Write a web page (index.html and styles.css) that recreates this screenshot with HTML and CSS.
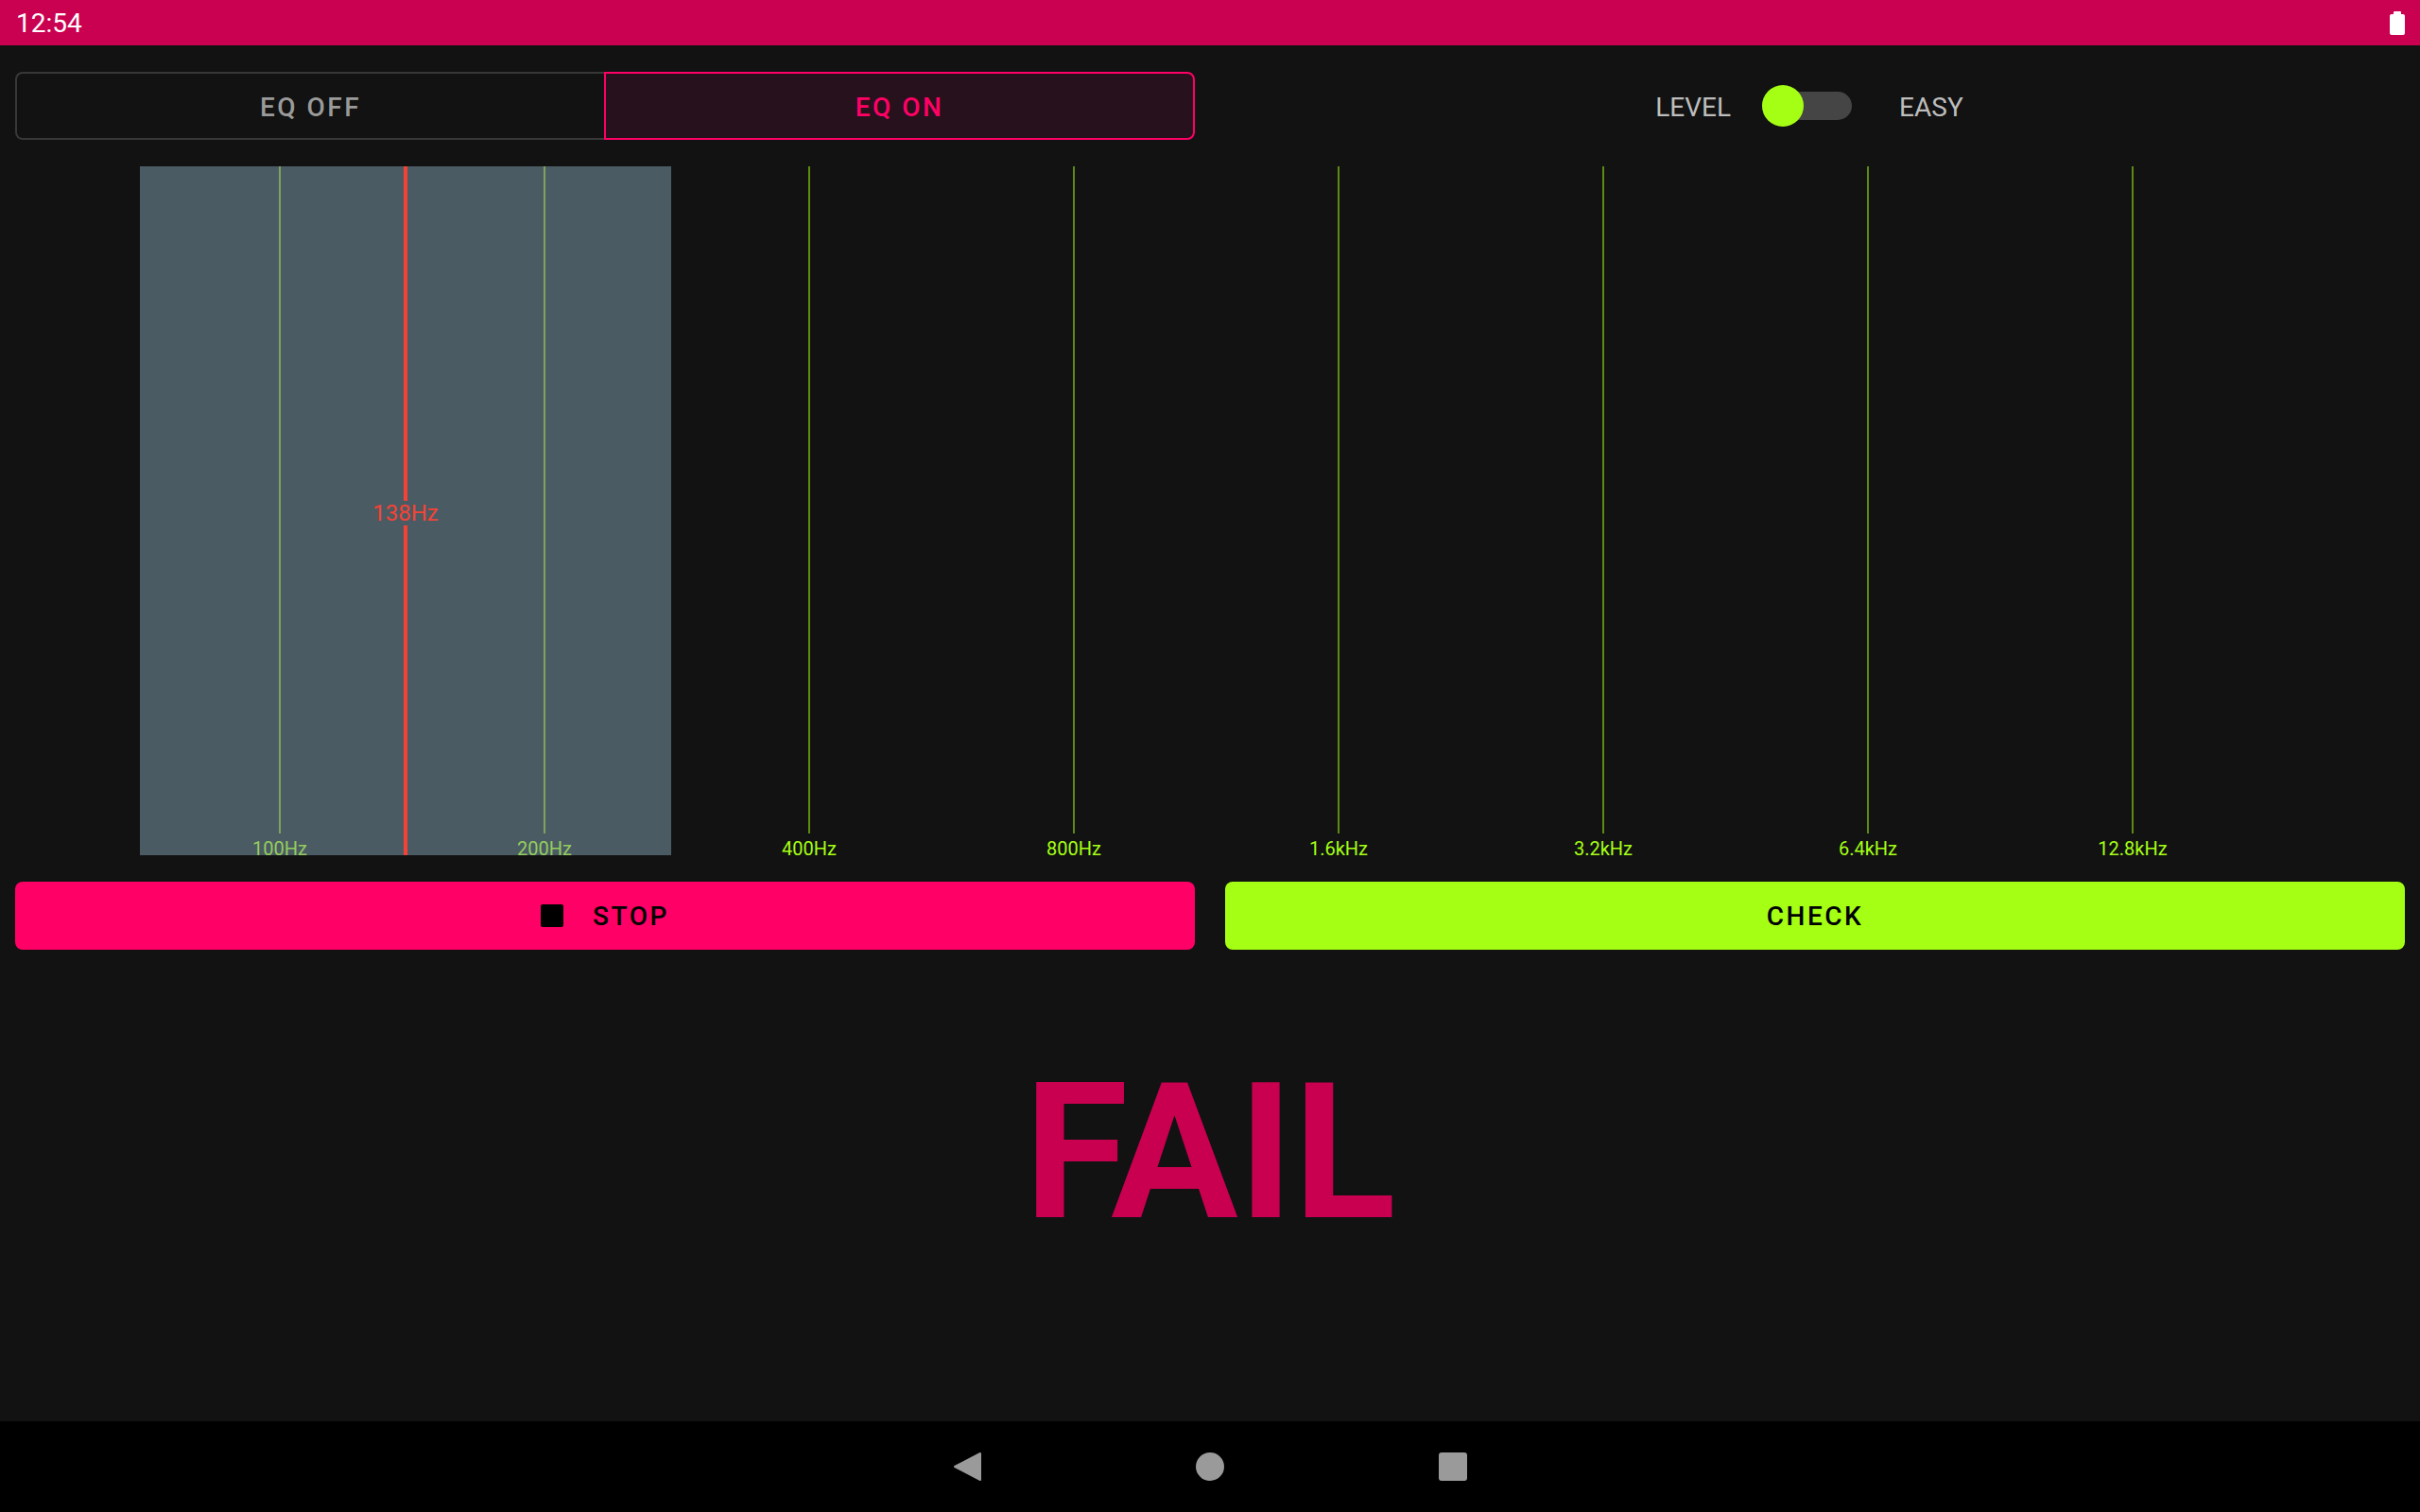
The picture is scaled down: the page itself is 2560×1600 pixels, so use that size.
FILE: index.html
```html
<!DOCTYPE html>
<html lang="en">
<head>
    <meta charset="UTF-8">
    <meta name="viewport" content="width=device-width, initial-scale=1.0">
    <title>EQ Trainer</title>
    <link rel="stylesheet" href="styles.css">
</head>
<body>
<div class="screen">
    <header class="status-bar">
        <span class="clock">12:54</span>
        <span class="battery"></span>
    </header>

    <main class="app">
        <div class="top-row">
            <div class="eq-toggle">
                <button class="seg">EQ OFF</button>
                <button class="seg active">EQ ON</button>
            </div>
            <div class="level">
                <span class="level-label">LEVEL</span>
                <span class="switch"><span class="knob"></span></span>
                <span class="level-value">EASY</span>
            </div>
        </div>

        <div class="chart">
            <div class="band" style="left: 132px; width: 562px;"></div>
            <div class="marker" style="left: 411px;"><span class="marker-label">138Hz</span></div>
            <div class="ticks">
                <div class="tick in-band"><span class="tick-line"></span><span class="tick-label">100Hz</span></div>
                <div class="tick in-band"><span class="tick-line"></span><span class="tick-label">200Hz</span></div>
                <div class="tick"><span class="tick-line"></span><span class="tick-label">400Hz</span></div>
                <div class="tick"><span class="tick-line"></span><span class="tick-label">800Hz</span></div>
                <div class="tick"><span class="tick-line"></span><span class="tick-label">1.6kHz</span></div>
                <div class="tick"><span class="tick-line"></span><span class="tick-label">3.2kHz</span></div>
                <div class="tick"><span class="tick-line"></span><span class="tick-label">6.4kHz</span></div>
                <div class="tick"><span class="tick-line"></span><span class="tick-label">12.8kHz</span></div>
            </div>
        </div>

        <div class="actions">
            <button class="btn stop"><span class="stop-icon"></span>STOP</button>
            <button class="btn check">CHECK</button>
        </div>

        <div class="result">FAIL</div>
    </main>

    <nav class="nav-bar">
        <svg class="nav-icon" width="32" height="32" viewBox="0 0 32 32">
            <path d="M30 2 L30 30 L3 16 Z" fill="#9a9a9a" stroke="#9a9a9a" stroke-width="2" stroke-linejoin="round"/>
        </svg>
        <svg class="nav-icon" width="32" height="32" viewBox="0 0 32 32">
            <circle cx="16" cy="16" r="15" fill="#9a9a9a"/>
        </svg>
        <svg class="nav-icon" width="32" height="32" viewBox="0 0 32 32">
            <rect x="1" y="1" width="30" height="30" rx="3" fill="#9a9a9a"/>
        </svg>
    </nav>
</div>
</body>
</html>
```

FILE: styles.css
```css
html, body {
    margin: 0;
    padding: 0;
    background-color: #121212;
}
body {
    font-family: Roboto, "Liberation Sans", sans-serif;
    color: #fff;
}
button {
    font-family: inherit;
    cursor: pointer;
}
.screen {
    width: 2560px;
    height: 1600px;
    display: flex;
    flex-direction: column;
    overflow: hidden;
}

/* status bar */
.status-bar {
    height: 48px;
    flex: none;
    background-color: #ca0050;
    display: flex;
    align-items: center;
    justify-content: space-between;
    padding: 0 16px 0 17px;
}
.clock {
    font-size: 28px;
    color: #fff;
    padding-top: 1px;
}
.battery {
    position: relative;
    width: 16px;
    height: 22px;
    margin-top: 3px;
    background-color: #fff;
    border-radius: 2px;
}
.battery::before {
    content: "";
    position: absolute;
    top: -3px;
    left: 4px;
    width: 8px;
    height: 4px;
    background-color: #fff;
    border-radius: 1px;
}

/* app */
.app {
    flex: 1;
    padding: 0 16px;
    display: flex;
    flex-direction: column;
}
.top-row {
    margin-top: 28px;
    height: 72px;
    display: flex;
    align-items: center;
}
.eq-toggle {
    width: 1248px;
    height: 72px;
    display: flex;
}
.seg {
    flex: 1;
    margin: 0;
    padding-top: 3px;
    font-size: 28px;
    font-weight: 500;
    letter-spacing: 2.5px;
    color: #9a9a9a;
    background-color: #121212;
    border: 2px solid #383838;
    border-right: none;
    border-radius: 8px 0 0 8px;
}
.seg.active {
    color: #ff0066;
    background-color: #27111c;
    border: 2px solid #ff0066;
    border-radius: 0 8px 8px 0;
}
.level {
    flex: 1;
    display: flex;
    align-items: center;
    justify-content: center;
    padding-left: 20px;
    padding-top: 2px;
    font-size: 28px;
    color: #bdbdbd;
}
.switch {
    position: relative;
    width: 95px;
    height: 30px;
    margin: -2px 50px 0 33px;
    border-radius: 15px;
    background-color: #454545;
}
.knob {
    position: absolute;
    left: 0;
    top: -7px;
    width: 44px;
    height: 44px;
    border-radius: 50%;
    background-color: #a5ff14;
}

/* frequency chart */
.chart {
    position: relative;
    margin-top: 28px;
    height: 733px;
}
.band {
    position: absolute;
    top: 0;
    height: 729px;
    background-color: #4b5b63;
}
.marker {
    position: absolute;
    top: 0;
    width: 4px;
    height: 729px;
    background-color: #f44336;
    z-index: 2;
}
.marker-label {
    position: absolute;
    left: 2px;
    top: 367px;
    transform: translate(-50%, -50%);
    padding: 0 2px;
    font-size: 24px;
    line-height: 26px;
    color: #f44336;
    background-color: #4b5b63;
}
.ticks {
    position: relative;
    z-index: 1;
    height: 100%;
    display: flex;
    padding-left: 140px;
}
.tick {
    width: 280px;
    display: flex;
    flex-direction: column;
    align-items: center;
}
.tick-line {
    flex: 1;
    width: 2px;
    background-color: #5d8a12;
}
.tick-label {
    padding-top: 6px;
    font-size: 20px;
    line-height: 21px;
    color: #a5ff14;
}
.tick.in-band .tick-line {
    background-color: #7ea35f;
}
.tick.in-band .tick-label {
    color: #94cd5e;
}

/* actions */
.actions {
    margin-top: 24px;
    height: 72px;
    display: flex;
    gap: 32px;
}
.btn {
    flex: 1;
    margin: 0;
    padding-top: 2px;
    border: none;
    border-radius: 8px;
    font-size: 28px;
    font-weight: 500;
    letter-spacing: 2.5px;
    color: #000;
    display: flex;
    align-items: center;
    justify-content: center;
}
.btn.stop {
    background-color: #ff0066;
}
.btn.check {
    background-color: #a5ff14;
}
.stop-icon {
    width: 24px;
    height: 24px;
    margin-right: 31px;
    margin-top: -2px;
    background-color: #000;
    border-radius: 2px;
}

.result {
    margin-top: 115px;
    text-align: center;
    font-size: 200px;
    line-height: 200px;
    font-weight: 700;
    color: #c8004f;
}

/* navigation bar */
.nav-bar {
    height: 96px;
    flex: none;
    background-color: #000;
    display: flex;
    align-items: center;
    justify-content: center;
    gap: 225px;
}
.nav-icon {
    display: block;
}
```
